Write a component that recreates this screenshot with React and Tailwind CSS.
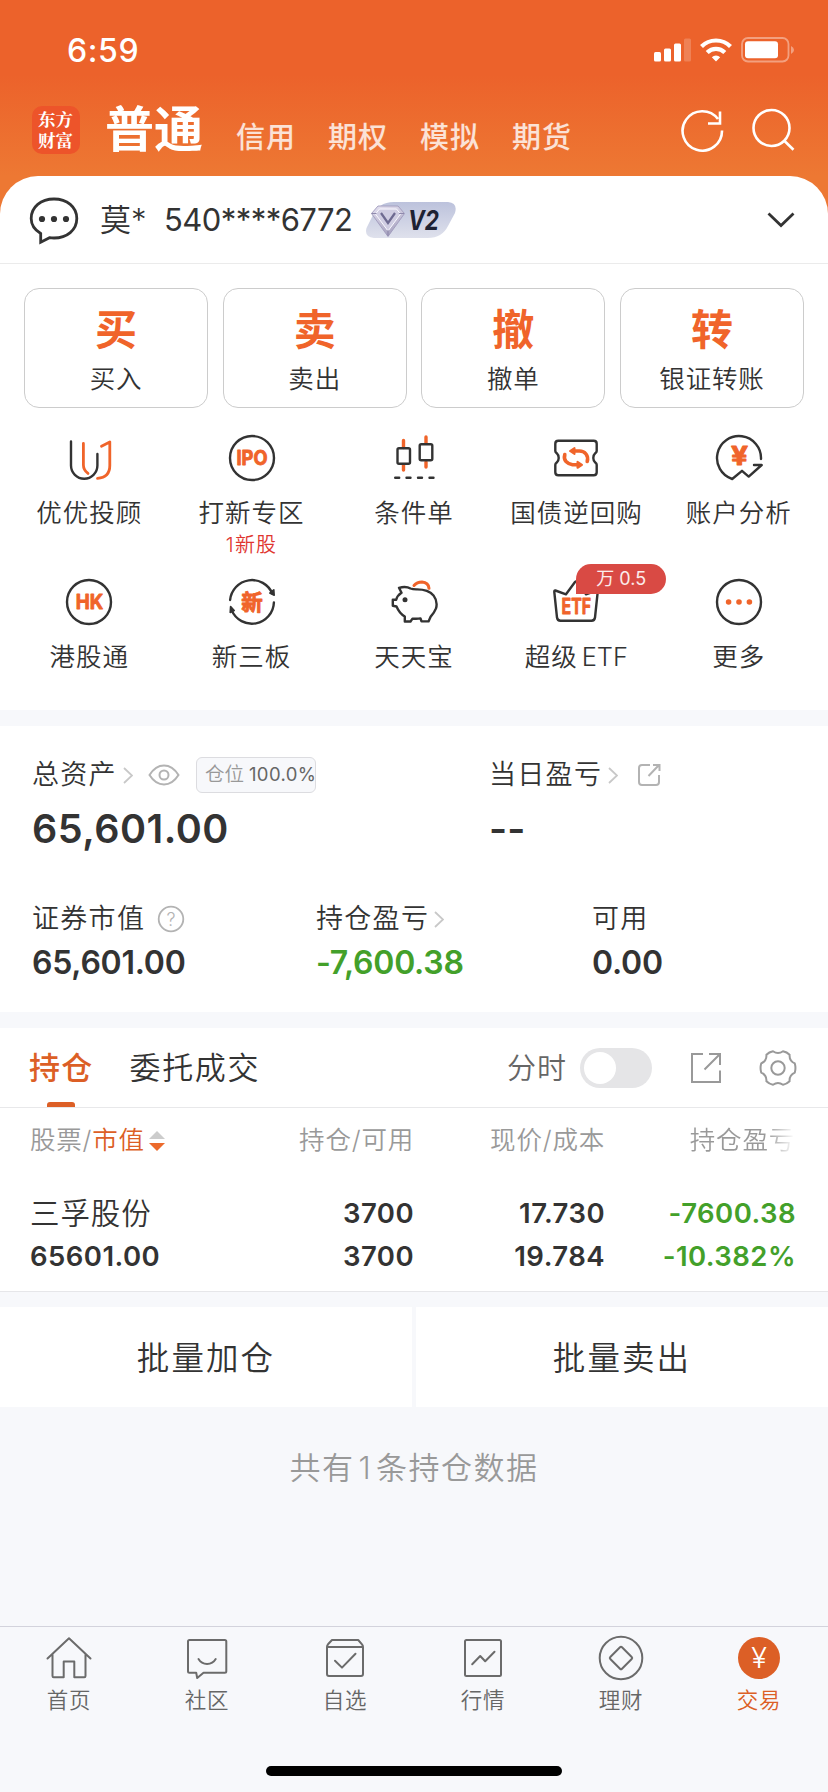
import React from 'react';

const quickActions = [
  { mark: '买', label: '买入' },
  { mark: '卖', label: '卖出' },
  { mark: '撤', label: '撤单' },
  { mark: '转', label: '银证转账' },
];

function Icon({ children, className = 'w-12 h-12' }) {
  return (
    <svg
      viewBox="0 0 48 48"
      className={className}
      fill="none"
      stroke="#333"
      strokeWidth="2.4"
      strokeLinecap="round"
      strokeLinejoin="round"
    >
      {children}
    </svg>
  );
}

function IconText({ x = 24, y, size = 21, width, children }) {
  return (
    <text
      x={x - width / 2}
      y={y}
      fontSize={size}
      fontWeight="700"
      fill="#f0642a"
      stroke="#f0642a"
      strokeWidth="0.9"
      textLength={width}
      lengthAdjust="spacingAndGlyphs"
      className="font-['Inter','Noto_Sans_CJK_SC',sans-serif]"
    >
      {children}
    </text>
  );
}

const services = [
  {
    label: '优优投顾',
    icon: (
      <Icon>
        <path d="M6 7.5v24a13.2 13.2 0 0 0 26.4 0V20" />
        <path
          d="M18.4 9.5V31q0 5 4.6 8.4M36.5 12.3L44.8 8v23.5q0 12-12.3 12.8"
          stroke="#f0642a"
          strokeWidth="2.8"
        />
      </Icon>
    ),
  },
  {
    label: '打新专区',
    note: '1新股',
    icon: (
      <Icon>
        <circle cx="24" cy="24" r="22" />
        <IconText y={31.2} size={20} width={31}>IPO</IconText>
      </Icon>
    ),
  },
  {
    label: '条件单',
    icon: (
      <Icon>
        <path d="M13.5 6.5v7M13.5 31v5M36 3v6M36 28v5" stroke="#f0642a" strokeWidth="3.4" />
        <rect x="7.5" y="14.3" width="12.5" height="15.500" rx="1.5" />
        <rect x="29.7" y="10.200" width="12.6" height="16" rx="1.5" />
        <path d="M5.2 43.8h4M16.5 43.8h4M28 43.8h4M39.5 43.8h4" />
      </Icon>
    ),
  },
  {
    label: '国债逆回购',
    icon: (
      <Icon>
        <path d="M6.3 6.8h35.4q3 0 3 3V17q0 1.2-1.4 2.2a6.5 6.5 0 0 0 0 9.4q1.4 1 1.4 2.2v7.4q0 3-3 3H6.3q-3 0-3-3v-7.4q0-1.2 1.4-2.2a6.5 6.5 0 0 0 0-9.4q-1.4-1-1.4-2.2V9.8q0-3 3-3z" />
        <g stroke="#f0642a" strokeWidth="3.6">
          <path d="M35.2 27.5q1.2-4.5-1.2-7.5t-6.5-3H22M12.8 20.5q-1.2 4.5 1.2 7t6.5 3.2H26" />
          <path d="M22.5 14v6l-4.5-3zM25.5 27.8v6l4.5-3z" strokeWidth="2" fill="#f0642a" />
        </g>
      </Icon>
    ),
  },
  {
    label: '账户分析',
    icon: (
      <Icon>
        <path d="M46 25A22 22 0 1 0 17.2 45L27 36.8l6.7 5.8L46.7 31H39" />
        <IconText x={24.6} y={31} size={25} width={17}>¥</IconText>
      </Icon>
    ),
  },
  {
    label: '港股通',
    icon: (
      <Icon>
        <circle cx="24" cy="24" r="22" />
        <IconText x={24.4} y={31.3} size={20.5} width={27.5}>HK</IconText>
      </Icon>
    ),
  },
  {
    label: '新三板',
    icon: (
      <Icon>
        <path d="M2.1 22A22 22 0 0 1 44.3 15.6M45.9 24.5A22 22 0 0 1 3.7 32.4" />
        <path d="M41.8 15l4-3.2.4 5.5zM6.2 32.5l-4 2 .4-6z" fill="#333" strokeWidth="1.6" />
        <IconText y={31.6} size={21.5} width={21.5}>新</IconText>
      </Icon>
    ),
  },
  {
    label: '天天宝',
    icon: (
      <Icon>
        <path d="M2.8 21.8h3.4q1-4.3 5.3-7L9 9.8q7-2 11.500.7 2.5 1 6.5.9 11.5 0 16.5 6 4.5 6 2.5 13-1.5 4-5.5 8.5l-2 4.500h-7l-1-3q-3.500.7-8 .2l-2 2.900h-5.700v-5q-5.300-3-8.300-10l-3.700-.7z" />
        <circle cx="15" cy="21.8" r="2.5" fill="#333" stroke="none" />
        <path d="M24 7.5q3-3.5 8-3.500 6.500.4 7 6.300" stroke="#f0642a" strokeWidth="3" />
      </Icon>
    ),
  },
  {
    label: (
      <>
        超级<span className="ml-[4px] tracking-normal font-light">ETF</span>
      </>
    ),
    badge: '万 0.5',
    icon: (
      <Icon>
        <path d="M3.4 12.5q-1.3-.3-1.1 1.500l2.700 25.500q.4 3.200 3.500 3.200h31q3.100 0 3.500-3.200l2.700-25.500q.2-1.800-1.100-1.500L34 16.300 25 4q-1-1.200-2 0l-9 12.300z" />
        <IconText x={24.3} y={36} width={29.5}>ETF</IconText>
      </Icon>
    ),
  },
  {
    label: '更多',
    icon: (
      <Icon>
        <circle cx="24" cy="24" r="22" />
        <g fill="#f0642a" stroke="none">
          <circle cx="13.6" cy="24" r="2.8" />
          <circle cx="24" cy="24" r="2.8" />
          <circle cx="34.4" cy="24" r="2.8" />
        </g>
      </Icon>
    ),
  },
];

const tabs = [
  {
    label: '首页',
    icon: <path d="M2.5 24.5L24 4.2l21.5 20.3M7.5 20.5V42q0 1.200 1.200 1.200h10V27.500h10.600v15.700h10q1.200 0 1.200-1.200V20.500" />,
  },
  {
    label: '社区',
    icon: (
      <>
        <path d="M6.5 6h35.3q1.5 0 1.5 1.500v29.800q0 1.500-1.500 1.500H20.500L14.200 44l-1-5.200H6.500q-1.500 0-1.500-1.500V7.500Q5 6 6.500 6z" />
        <path d="M15.5 25a10 10 0 0 0 17.2 0" />
      </>
    ),
  },
  {
    label: '自选',
    icon: (
      <>
        <path d="M6 13h36v27q0 2-2 2H8q-2 0-2-2zq0-1.500 1-2.700L11 6h26.200L41 10.300q1 1.200 1 2.700" />
        <path d="M14 26.8l7 6.800 13.500-13.800" />
      </>
    ),
  },
  {
    label: '行情',
    icon: (
      <>
        <rect x="6" y="6" width="36" height="36" rx="1.5" />
        <path d="M13.2 30.2l8-8.200 5 5.300 9.300-9.500" />
      </>
    ),
  },
  {
    label: '理财',
    icon: (
      <>
        <circle cx="24" cy="24" r="21.3" />
        <path d="M23 13.3q1-1 2 0l9.700 9.700q1 1 0 2L25 34.700q-1 1-2 0L13.300 25q-1-1 0-2z" />
      </>
    ),
  },
];

function ChevronRight() {
  return (
    <svg viewBox="0 0 10 17" className="w-[10px] h-[17px]" fill="none" stroke="#c8c8c8" strokeWidth="1.8">
      <path d="M1 1l8 7.500L1 16" />
    </svg>
  );
}

function StatusBar() {
  return (
    <div className="h-[88px] pl-[67px] pr-[34px] pt-[35px] flex justify-between items-start text-white">
      <span className="text-[32px] leading-[32px] font-medium tracking-[0.6px]">6:59</span>
      <div className="flex items-center gap-[9px] pt-[2px]">
        <svg viewBox="0 0 37 24" className="w-[37px] h-6" fill="#fff">
          <rect x="0" y="14" width="7" height="9.5" rx="1.5" />
          <rect x="10" y="10.5" width="7" height="13" rx="1.5" />
          <rect x="20" y="5.5" width="7" height="18" rx="1.5" />
          <rect x="30" y="0.5" width="7" height="23" rx="1.5" opacity="0.2" />
        </svg>
        <svg viewBox="0 0 32 24" className="w-8 h-6" fill="none" stroke="#fff" strokeWidth="4.2">
          <path d="M1.5 8.5a20.500 20.500 0 0 1 29 0" />
          <path d="M7.2 14.5a12.400 12.400 0 0 1 17.600 0" />
          <path d="M11.8 19.2L16 23.5l4.200-4.300a6 6 0 0 0-8.400 0z" fill="#fff" stroke="none" />
        </svg>
        <svg viewBox="0 0 53 26" className="w-[53px] h-[26px]" fill="none">
          <rect x="1" y="1" width="46.5" height="23.5" rx="6" stroke="#fff" strokeOpacity="0.4" strokeWidth="1.8" />
          <rect x="4" y="4.2" width="33" height="17" rx="3" fill="#fff" />
          <path d="M50 9v8q3-1.500 3-4t-3-4z" fill="#fff" fillOpacity="0.4" />
        </svg>
      </div>
    </div>
  );
}

function Header() {
  return (
    <div className="h-[88px] pl-8 pr-[33px] flex items-start text-white">
      <div className="mt-[18px] w-12 h-12 px-[6px] pt-[3px] rounded-[10px] bg-[#ed542a] text-[17.5px] leading-[20.5px] font-bold break-all font-['Noto_Serif_CJK_SC','Noto_Sans_CJK_SC',serif]">
        东方财富
      </div>
      <h1 className="ml-[25px] mt-[17px] w-[107px] text-[49px] leading-[50px] font-bold">普通</h1>
      <nav className="ml-[24px] mt-[35px] flex gap-[32px] text-[29px] leading-[30px] font-medium tracking-[1px] text-white/80">
        <span>信用</span>
        <span>期权</span>
        <span>模拟</span>
        <span>期货</span>
      </nav>
      <div className="ml-auto mt-[20px] flex gap-[27px]">
        <svg viewBox="0 0 44 44" className="w-11 h-11" fill="none" stroke="#fff" strokeWidth="2.6">
          <path d="M42 22.600A19.700 19.700 0 1 1 38 11M40 3.500V15.500H28" />
        </svg>
        <svg viewBox="0 0 44 44" className="w-11 h-11" fill="none" stroke="#fff" strokeWidth="2.6">
          <circle cx="20.5" cy="20" r="18" />
          <path d="M33 32.500L42.500 41.700" />
        </svg>
      </div>
    </div>
  );
}

function VipBadge() {
  return (
    <svg viewBox="0 0 90 36" className="w-[90px] h-9">
      <defs>
        <linearGradient id="vip" x1="0" y1="0" x2="0" y2="1">
          <stop offset="0" stopColor="#bcc2dc" />
          <stop offset="1" stopColor="#dfe1ec" />
        </linearGradient>
        <linearGradient id="gem" x1="0" y1="0" x2="0.3" y2="1">
          <stop offset="0" stopColor="#e6e3f2" />
          <stop offset="1" stopColor="#a8a3c0" />
        </linearGradient>
      </defs>
      <path d="M28 0h54q10 1 7 11l-7 13q-6 12-20 12H8q-10-1-7.500-10L6 15Q12 0 28 0z" fill="url(#vip)" />
      <path d="M12 4h20l6.500 7.500L22 34.500 5.500 11.500z" fill="url(#gem)" stroke="#9f9abb" strokeWidth="0.9" />
      <path d="M13.5 7h17l4 5L22 29 9.500 12z" fill="#d0cde2" stroke="#faf9ff" strokeWidth="1" />
      <path d="M15 11l7 10L29 11" fill="none" stroke="#6e6a91" strokeWidth="2.2" />
      <path d="M5.5 11.500h5M33 11.500h5M22 28v6" fill="none" stroke="#8f8aad" strokeWidth="1.2" />
      <text x="42" y="27.5" fontSize="27" fontWeight="700" fontStyle="italic" fill="#1e2233" textLength="31" lengthAdjust="spacingAndGlyphs">
        V2
      </text>
    </svg>
  );
}

function AccountRow() {
  return (
    <div className="h-[88px] pl-[29px] pr-[33px] flex items-center border-b border-[#ebebeb] text-[#333]">
      <svg viewBox="0 0 50 50" className="w-[50px] h-[50px]" fill="none" stroke="#333" strokeWidth="2.8">
        <path d="M11.7 38.5C5 34.5 2.2 29.5 2.2 23.5 2.200 12 12 4 25 4s22.800 8 22.800 19.500S38 43 25 43q-2.500 0-4.500-.3l-8.800 4.600z" />
        <g fill="#333" stroke="none">
          <circle cx="13" cy="24" r="3.1" />
          <circle cx="25" cy="24" r="3.1" />
          <circle cx="37" cy="24" r="3.1" />
        </g>
      </svg>
      <span className="ml-[21px] w-[64px] text-[31px] leading-[40px] font-[350]">莫*</span>
      <span className="w-[192px] text-[31px] leading-[40px] tracking-[-0.55px] whitespace-nowrap">540****6772</span>
      <span className="ml-[10px]">
        <VipBadge />
      </span>
      <svg viewBox="0 0 28 16" className="ml-auto w-7 h-4" fill="none" stroke="#333" strokeWidth="2.8">
        <path d="M1.5 1.500L14 13.500l12.500-12" />
      </svg>
    </div>
  );
}

function QuickActions() {
  return (
    <div className="px-6 pt-6 grid grid-cols-4 gap-[14.6px]">
      {quickActions.map((a) => (
        <div
          key={a.mark}
          className="h-[120px] rounded-[15px] border border-[#ccc] flex flex-col items-center pt-[18px]"
        >
          <span className="text-[42px] leading-[46px] font-bold text-[#f0642a]">{a.mark}</span>
          <span className="mt-[11px] text-[25.5px] leading-[30px] tracking-[0.8px] font-[350]">{a.label}</span>
        </div>
      ))}
    </div>
  );
}

function Services() {
  return (
    <div className="px-[8px] pt-[26px] grid grid-cols-5">
      {services.map((s, i) => (
        <div key={i} className="relative h-[144px] flex flex-col items-center">
          {s.icon}
          <span className="mt-[16px] text-[25.5px] leading-[30px] tracking-[1px] font-[350]">{s.label}</span>
          {s.note && (
            <span className="mt-[5px] text-[20px] leading-[24px] tracking-[1.2px] font-[350] text-[#e0352f]">{s.note}</span>
          )}
          {s.badge && (
            <span className="absolute left-[81px] -top-[14px] w-[90px] h-[30px] rounded-[15px] rounded-bl-none bg-[#d94a44] text-white/90 text-[18px] leading-[30px] text-center">
              {s.badge}
            </span>
          )}
        </div>
      ))}
    </div>
  );
}

function Assets() {
  return (
    <section className="h-[286px] px-[32px] bg-white">
      <div className="flex pt-[31px]">
        <div className="w-[457px]">
          <div className="h-9 flex items-center">
            <span className="text-[27px] tracking-[1.3px] font-[350]">总资产</span>
            <span className="ml-[6px]">
              <ChevronRight />
            </span>
            <svg viewBox="0 0 32 22" className="ml-[15px] w-8 h-[22px]" fill="none" stroke="#b3b3b3" strokeWidth="2">
              <path d="M1.5 11Q7.500 1.500 16 1.500T30.500 11Q24.500 20.500 16 20.500T1.500 11z" />
              <circle cx="16" cy="11" r="4.5" />
            </svg>
            <span className="ml-[16px] w-[120px] h-9 pl-[8px] rounded-[6px] border border-[#dcdce0] bg-[#f7f8fb] flex items-center whitespace-nowrap text-[19.5px] font-[350] text-[#999]">
              仓位<span className="ml-[5px] text-[18.5px] tracking-[0.4px] font-normal text-[#666]">100.0%</span>
            </span>
          </div>
          <div className="mt-[16px] text-[39.5px] leading-[40px] tracking-[0.5px] font-semibold">65,601.00</div>
        </div>
        <div>
          <div className="h-9 flex items-center">
            <span className="text-[27px] tracking-[1.3px] font-[350]">当日盈亏</span>
            <span className="ml-[6px]">
              <ChevronRight />
            </span>
            <svg viewBox="0 0 24 24" className="ml-[19px] w-6 h-6" fill="none" stroke="#b3b3b3" strokeWidth="2">
              <path d="M13 2H5Q2 2 2 5v14q0 3 3 3h14q3 0 3-3v-7M16 2h6.500M22.500 1v7M22 2L11.500 13" />
            </svg>
          </div>
          <div className="mt-[16px] text-[39px] leading-[40px] font-semibold">--</div>
        </div>
      </div>
      <div className="pt-[53px] flex text-[27px] leading-[34px]">
        <div className="w-[284px]">
          <div className="flex items-center tracking-[1.3px] font-[350]">
            证券市值
            <svg viewBox="0 0 28 28" className="ml-[12px] w-7 h-7" fill="none" stroke="#b3b3b3" strokeWidth="1.8">
              <circle cx="14" cy="14" r="12.3" />
              <text x="14" y="20.5" textAnchor="middle" fontSize="18" fill="#b3b3b3" stroke="none" letterSpacing="0">
                ?
              </text>
            </svg>
          </div>
          <div className="mt-[10px] text-[32px] tracking-[-0.25px] font-semibold">65,601.00</div>
        </div>
        <div className="w-[276px]">
          <div className="flex items-center tracking-[1.3px] font-[350]">
            持仓盈亏
            <span className="ml-[5px]">
              <ChevronRight />
            </span>
          </div>
          <div className="mt-[10px] text-[32px] tracking-[-0.25px] font-semibold text-[#43a02a]">-7,600.38</div>
        </div>
        <div>
          <div className="tracking-[1.3px] font-[350]">可用</div>
          <div className="mt-[10px] text-[32px] tracking-[-0.25px] font-semibold">0.00</div>
        </div>
      </div>
    </section>
  );
}

function Positions() {
  return (
    <section className="h-[264px] bg-white border-b border-[#e6e6e9]">
      <div className="h-20 pl-[29px] pr-[31px] flex items-center border-b border-[#e8e8ea]">
        <div className="relative h-full pt-[2px] flex items-center text-[31px] tracking-[1.3px] font-medium text-[#dc5f26]">
          持仓
          <span className="absolute left-[18px] bottom-0 w-7 h-[5px] rounded-t-[3px] bg-[#dc5f26]" />
        </div>
        <span className="ml-[36px] pt-[2px] text-[31px] tracking-[1.6px] font-[350]">委托成交</span>
        <span className="ml-auto pt-[2px] text-[29px] tracking-[1px] font-[350] text-[#666]">分时</span>
        <span className="ml-[13px] w-[72px] h-10 p-1 rounded-full bg-[#e5e5e7]">
          <span className="block w-8 h-8 rounded-full bg-white" />
        </span>
        <svg viewBox="0 0 32 32" className="ml-[38px] w-8 h-8" fill="none" stroke="#999" strokeWidth="2">
          <path d="M13 2H2v28h28V18.500M19 2h11v11M30 2L14.500 17.500" />
        </svg>
        <svg viewBox="0 0 38 38" className="ml-[37px] w-[38px] h-[38px]" fill="none" stroke="#999" strokeWidth="2" strokeLinejoin="round">
          <path d="M14 2.300c3.300 2.300 6.700 2.300 10 0 3 .6 4.600 1.500 6.600 3.500-.3 4 1.400 6.900 5.200 8.600.9 3.200.9 6 0 9.200-3.800 1.700-5.500 4.600-5.200 8.600-2 2-3.600 2.900-6.600 3.500-3.300-2.300-6.700-2.300-10 0-3-.6-4.600-1.500-6.600-3.500.3-4-1.400-6.900-5.200-8.600-.9-3.200-.9-6 0-9.200 3.800-1.700 5.500-4.600 5.200-8.600 2-2 3.600-2.900 6.600-3.500z" />
          <circle cx="19" cy="19" r="6.7" />
        </svg>
      </div>

      <div className="h-[65px] pl-[30px] grid grid-cols-[192px_192px_191px_190px] items-center text-[25.5px] tracking-[0.8px] font-[350] text-[#999]">
        <div className="flex items-center">
          股票/<span className="text-[#dc5f26]">市值</span>
          <svg viewBox="0 0 16 22" className="ml-[4px] w-4 h-[22px]">
            <path d="M8 1l8 8H0z" fill="#ccc" />
            <path d="M8 21l8-8H0z" fill="#ec6a2c" />
          </svg>
        </div>
        <div className="text-right">持仓/可用</div>
        <div className="text-right">现价/成本</div>
        <div className="text-right whitespace-nowrap bg-[linear-gradient(to_right,#999_85%,transparent)] bg-clip-text text-transparent">
          持仓盈亏
        </div>
      </div>

      <div className="pt-[23px] pl-[30px] grid grid-cols-[192px_192px_191px_191px] gap-y-[9px] text-[27.5px] leading-[34px] font-semibold text-right tracking-[0.45px]">
        <span className="text-left text-[29.5px] tracking-[0.9px] font-[350]">三孚股份</span>
        <span>3700</span>
        <span>17.730</span>
        <span className="text-[#43a02a]">-7600.38</span>
        <span className="text-left">65601.00</span>
        <span>3700</span>
        <span>19.784</span>
        <span className="text-[#43a02a]">-10.382%</span>
      </div>
    </section>
  );
}

function TabBar() {
  return (
    <footer className="h-[166px] border-t border-[#d3d3dc] flex flex-col items-center">
      <div className="w-full grid grid-cols-6 pt-[7px] text-[21.5px] leading-[26px] tracking-[0.8px] font-[350] text-[#666]">
        {tabs.map((t) => (
          <div key={t.label} className="flex flex-col items-center">
            <svg
              viewBox="0 0 48 48"
              className="w-12 h-12"
              fill="none"
              stroke="#6b6b6b"
              strokeWidth="2"
              strokeLinecap="round"
              strokeLinejoin="round"
            >
              {t.icon}
            </svg>
            <span className="mt-[5px]">{t.label}</span>
          </div>
        ))}
        <div className="flex flex-col items-center text-[#dc5f26]">
          <span className="w-12 h-12 flex items-center justify-center">
            <span className="w-[42px] h-[42px] rounded-full bg-[#dc5f26] text-white text-[29px] leading-[42px] text-center tracking-normal font-light">
              ¥
            </span>
          </span>
          <span className="mt-[5px]">交易</span>
        </div>
      </div>
      <div className="mt-auto mb-4 w-[296px] h-[10px] rounded-full bg-black" />
    </footer>
  );
}

export default function App() {
  return (
    <div className="w-[828px] h-[1792px] flex flex-col overflow-hidden bg-[#f7f8fb] text-[#333] font-['Inter','Noto_Sans_CJK_SC',sans-serif]">
      <div className="h-[710px] bg-[linear-gradient(to_bottom,#ec622b_0px,#ec622b_75px,#ed7833_176px,#ed7833_220px)]">
        <StatusBar />
        <Header />
        <div className="h-[534px] rounded-t-[38px] bg-white">
          <AccountRow />
          <QuickActions />
          <Services />
        </div>
      </div>
      <div className="h-4 shrink-0" />
      <Assets />
      <div className="h-4 shrink-0" />
      <Positions />
      <div className="mt-[15px] h-[100px] grid grid-cols-2 gap-1 text-center text-[32.5px] leading-[103px] tracking-[2.1px] font-[350]">
        <div className="h-[100px] bg-white">批量加仓</div>
        <div className="h-[100px] bg-white">批量卖出</div>
      </div>
      <p className="mt-[44px] text-center text-[31px] leading-[34px] tracking-[1.5px] font-[350] text-[#999]">
        共有<span className="mx-[4px]">1</span>条持仓数据
      </p>
      <div className="flex-1" />
      <TabBar />
    </div>
  );
}
